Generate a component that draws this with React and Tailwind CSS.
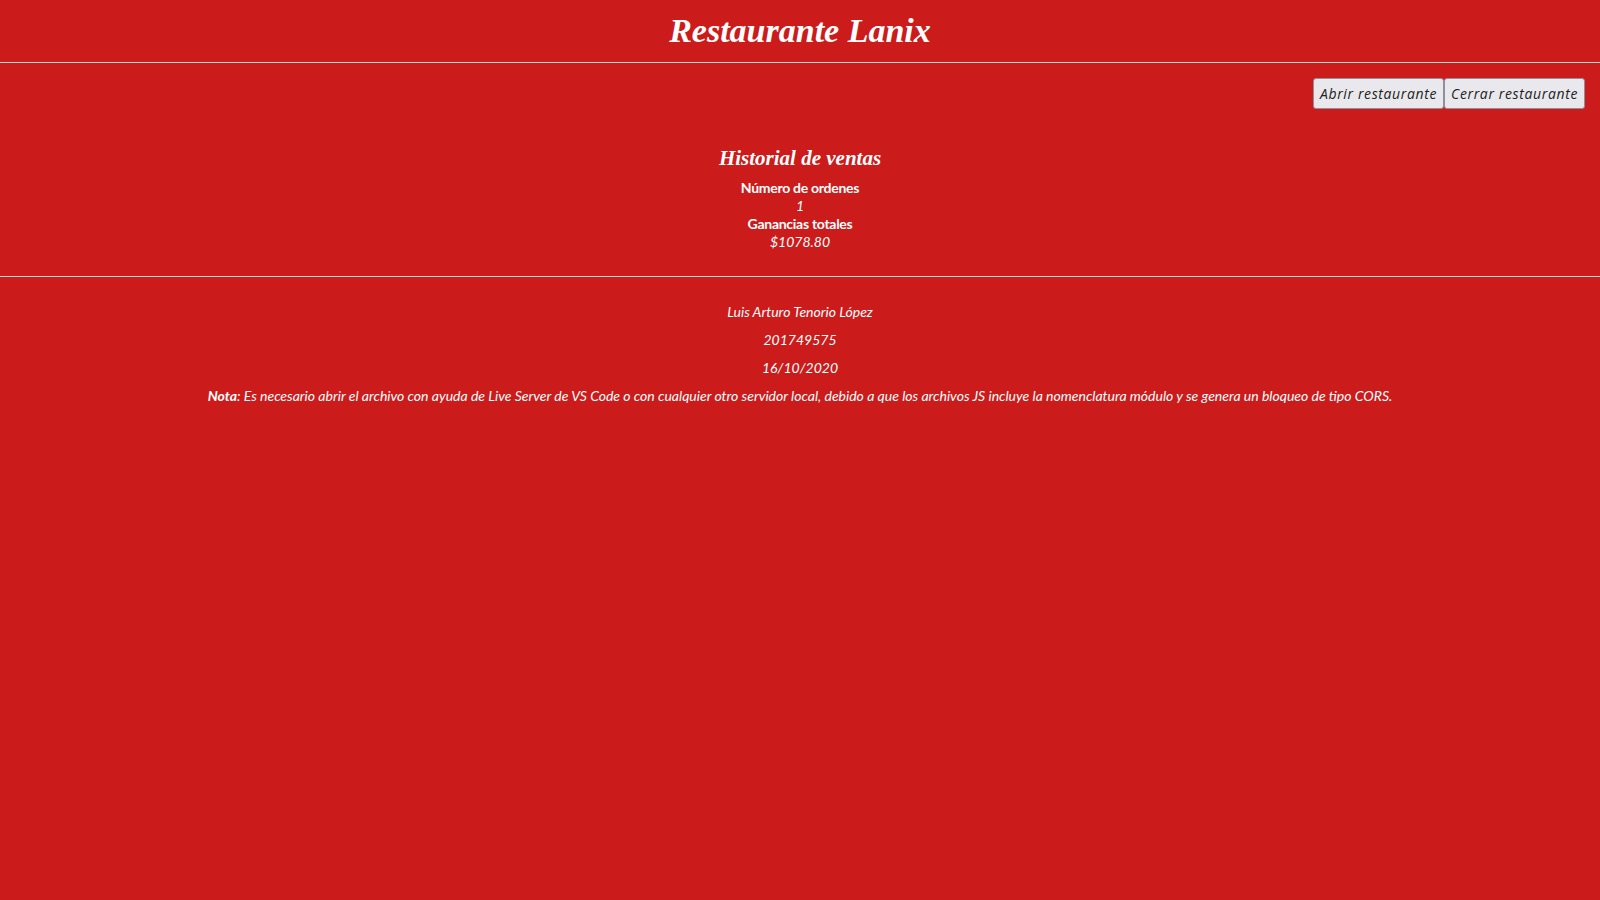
export default function App() {
  const body = { fontFamily: '"Lato", "Open Sans", sans-serif' };
  return (
    <div className="min-h-[900px] w-full bg-[#cb1b1b] text-white" style={body}>
      <header className="flex h-[62px] items-center justify-center">
        <h1
          className="text-[34px] font-bold italic leading-none"
          style={{ fontFamily: '"Liberation Serif", "DejaVu Serif", serif' }}
        >
          Restaurante Lanix
        </h1>
      </header>
      <hr className="border-0 border-t border-[#f0d0d0]" />

      <div className="flex justify-end pr-[15px] pt-[15px]">
        <button
          className="h-[31px] rounded-[3px] border border-[#8f8f9d] bg-[#e9e9ed] px-[6px] text-[14px] italic tracking-[0.045em] text-[#222]"
          style={{ fontFamily: '"Open Sans", sans-serif' }}
        >
          Abrir restaurante
        </button>
        <button
          className="h-[31px] rounded-[3px] border border-[#8f8f9d] bg-[#e9e9ed] px-[6px] text-[14px] italic tracking-[0.045em] text-[#222]"
          style={{ fontFamily: '"Open Sans", sans-serif' }}
        >
          Cerrar restaurante
        </button>
      </div>

      <section className="flex flex-col items-center pt-[36px] pb-[25px] text-center">
        <h2
          className="text-[21px] font-bold italic leading-[26px]"
          style={{ fontFamily: '"Liberation Serif", "DejaVu Serif", serif' }}
        >
          Historial de ventas
        </h2>
        <div className="mt-[8px] flex flex-col items-center text-[14px] leading-[18px]">
          <span className="font-bold tracking-[-0.02em]">Número de ordenes</span>
          <span className="italic">1</span>
          <span className="font-bold tracking-[-0.02em]">Ganancias totales</span>
          <span className="italic">$1078.80</span>
        </div>
      </section>
      <hr className="border-0 border-t border-[#f0d0d0]" />

      <footer className="flex flex-col items-center pt-[21px] text-center text-[14px] italic leading-[28px]">
        <p>Luis Arturo Tenorio López</p>
        <p>201749575</p>
        <p>16/10/2020</p>
        <p>
          <b>Nota</b>: Es necesario abrir el archivo con ayuda de Live Server de VS Code o con cualquier otro servidor local, debido a que los archivos JS incluye la nomenclatura módulo y se genera un bloqueo de tipo CORS.
        </p>
      </footer>
    </div>
  );
}
